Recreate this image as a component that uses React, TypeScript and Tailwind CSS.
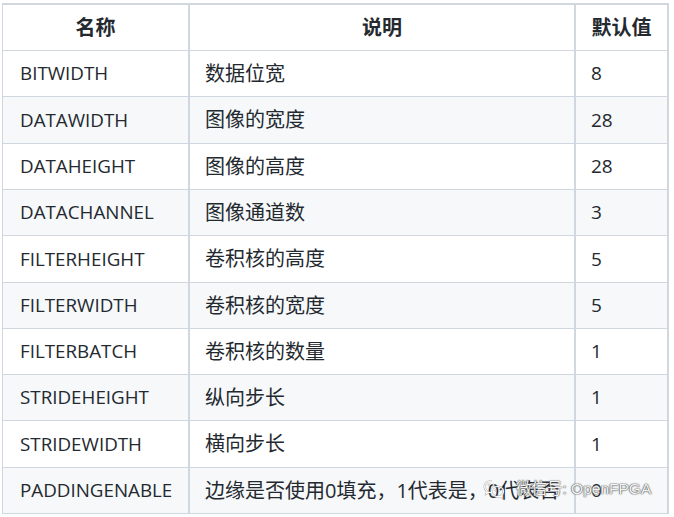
import React from "react";

const rows: { name: string; desc: string; def: string; h: string }[] = [
  { name: "BITWIDTH", desc: "数据位宽", def: "8", h: "h-[46px]" },
  { name: "DATAWIDTH", desc: "图像的宽度", def: "28", h: "h-[47px]" },
  { name: "DATAHEIGHT", desc: "图像的高度", def: "28", h: "h-[46px]" },
  { name: "DATACHANNEL", desc: "图像通道数", def: "3", h: "h-[46px]" },
  { name: "FILTERHEIGHT", desc: "卷积核的高度", def: "5", h: "h-[47px]" },
  { name: "FILTERWIDTH", desc: "卷积核的宽度", def: "5", h: "h-[46px]" },
  { name: "FILTERBATCH", desc: "卷积核的数量", def: "1", h: "h-[46px]" },
  { name: "STRIDEHEIGHT", desc: "纵向步长", def: "1", h: "h-[46px]" },
  { name: "STRIDEWIDTH", desc: "横向步长", def: "1", h: "h-[47px]" },
  { name: "PADDINGENABLE", desc: "边缘是否使用0填充，1代表是，0代表否", def: "0", h: "h-[46px]" },
];

const bubbleA = "M8.5 2C4.6 2 1.5 4.6 1.5 7.8c0 1.8 1 3.4 2.6 4.5l-.7 2.2 2.6-1.3c.8.2 1.6.4 2.5.4";
const bubbleB = "M14.5 7.5c-3.3 0-6 2.2-6 5s2.7 5 6 5c.7 0 1.4-.1 2-.3l2.2 1.1-.6-1.9c1.5-.9 2.4-2.3 2.4-3.9 0-2.8-2.7-5-6-5z";

function WeChatIcon() {
  return (
    <svg width="22" height="20" viewBox="0 0 22 20" fill="none">
      <g stroke="#777" strokeWidth="2.2" strokeOpacity="0.5">
        <path d={bubbleA} />
        <path d={bubbleB} />
      </g>
      <g stroke="#fff" strokeWidth="1.1">
        <path d={bubbleA} />
        <path d={bubbleB} />
      </g>
      <circle cx="6" cy="6" r="1" fill="#fff" stroke="#888" strokeWidth="0.4" />
      <circle cx="10.5" cy="6" r="1" fill="#fff" stroke="#888" strokeWidth="0.4" />
      <circle cx="12.5" cy="11.5" r="0.8" fill="#fff" stroke="#888" strokeWidth="0.4" />
      <circle cx="16.5" cy="11.5" r="0.8" fill="#fff" stroke="#888" strokeWidth="0.4" />
    </svg>
  );
}

export default function App() {
  return (
    <div className="w-[674px] h-[517px] bg-white pt-[3px] pl-[2px] relative overflow-hidden font-['Open_Sans','Noto_Sans_CJK_SC',sans-serif] text-[#24292f]">
      <div className="w-[667px] border-t-2 border-l border-r-2 border-[#d0d7de]">
        <div className="flex h-[46px] border-b border-[#d0d7de] font-bold text-[20px]">
          <div className="w-[187px] border-r-2 border-[#d0d7de] flex items-center justify-center">名称</div>
          <div className="w-[386px] border-r-2 border-[#d0d7de] flex items-center justify-center">说明</div>
          <div className="flex-1 flex items-center justify-center">默认值</div>
        </div>
        {rows.map((r, i) => (
          <div
            key={r.name}
            className={`flex ${r.h} border-b border-[#d0d7de] ${i % 2 === 1 ? "bg-[#f6f8fa]" : "bg-white"}`}
          >
            <div className="w-[187px] border-r-2 border-[#d0d7de] flex items-center pl-[17px] text-[18.8px]">{r.name}</div>
            <div className="w-[386px] border-r-2 border-[#d0d7de] flex items-center pl-[15px] whitespace-nowrap text-[20px]">{r.desc}</div>
            <div className="flex-1 flex items-center pl-[15px] text-[19px]">{r.def}</div>
          </div>
        ))}
      </div>
      <div className="absolute left-[483px] top-[477px] flex items-center gap-[11px] text-white/95 text-[15.5px] font-['Liberation_Sans','Noto_Sans_CJK_SC',sans-serif] [text-shadow:0_0_1px_#555,0_0_1px_#555,0_0_2px_#888]">
        <WeChatIcon />
        <span>微信号: OpenFPGA</span>
      </div>
    </div>
  );
}
